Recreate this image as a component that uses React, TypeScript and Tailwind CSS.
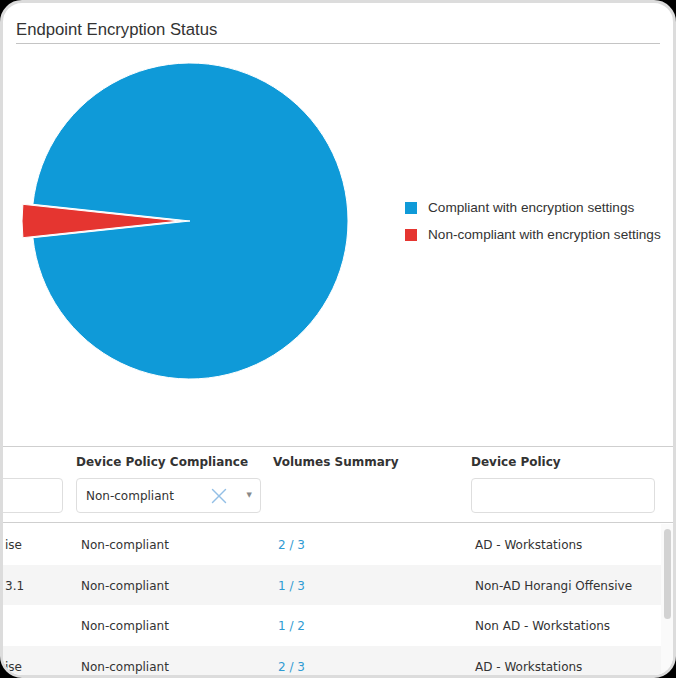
import { X } from 'lucide-react'

const rows = [
  { os: 'ise', compliance: 'Non-compliant', volumes: '2 / 3', policy: 'AD - Workstations' },
  { os: '3.1', compliance: 'Non-compliant', volumes: '1 / 3', policy: 'Non-AD Horangi Offensive' },
  { os: '', compliance: 'Non-compliant', volumes: '1 / 2', policy: 'Non AD - Workstations' },
  { os: 'ise', compliance: 'Non-compliant', volumes: '2 / 3', policy: 'AD - Workstations' },
]

const legend = [
  { label: 'Compliant with encryption settings', color: 'bg-[#0f9ad8]' },
  { label: 'Non-compliant with encryption settings', color: 'bg-[#e53530]' },
]

function Pie() {
  return (
    <svg width="402" height="402" viewBox="0 0 402 402" className="shrink-0">
      <path d="M187,177 L29.9,160.3 A158,158 0 1 1 29.9,193.7 Z" fill="#0f9ad8" stroke="#fff" strokeWidth="1" />
      <path d="M177,177 L19.9,193.7 A158,158 0 0 1 19.9,160.3 Z" fill="#e53530" stroke="#fff" strokeWidth="1" />
    </svg>
  )
}

export default function App() {
  return (
    <div className="h-[678px] w-[676px] bg-black">
      <div className="flex h-full flex-col overflow-hidden rounded-[22px] border-[3px] border-[#dcdcdc] bg-white" style={{ fontFamily: '"Liberation Sans", Arial, sans-serif' }}>
        {/* titolo */}
        <div className="px-[13px] pt-[17px]">
          <h2 className="border-b border-[#c4c4c4] pb-[4px] text-[16.7px] leading-[19px] text-[#333]">Endpoint Encryption Status</h2>
        </div>

        {/* grafico + legenda */}
        <div className="flex h-[402px] items-start">
          <Pie />
          <div className="flex flex-col gap-[12px] pt-[156px]">
            {legend.map((l) => (
              <div key={l.label} className="flex items-center gap-[11px] text-[13.6px] leading-[15px] text-[#333]">
                <span className="h-[12px] w-[12px] shrink-0">
                  <span className={`block h-full w-full ${l.color}`} />
                </span>
                <span>{l.label}</span>
              </div>
            ))}
          </div>
        </div>

        {/* tabella */}
        <div className="flex-1 border-t border-[#cfcfcf] text-[12px] text-[#333]" style={{ fontFamily: '"DejaVu Sans", Verdana, sans-serif' }}>
          <div className="grid h-[76px] grid-cols-[67px_197px_198px_196px_12px] border-b border-[#cfcfcf]">
            <div className="pr-[7px] pt-[31px]">
              <div className="-ml-[20px] h-[35px] rounded-[4px] border border-[#dedede] bg-white" />
            </div>
            <div className="px-[6px] pt-[7px]">
              <div className="font-bold leading-[16px]">Device Policy Compliance</div>
              <div className="mt-[8px] flex h-[35px] items-center rounded-[4px] border border-[#dedede] pl-[9px] pr-[8px]">
                <span className="flex-1">Non-compliant</span>
                <X className="h-[26px] w-[26px] text-[#93bfe6]" strokeWidth={1.3} />
                <span className="ml-[15px] text-[7px] text-[#888]">▼</span>
              </div>
            </div>
            <div className="px-[6px] pt-[7px] font-bold leading-[16px]">Volumes Summary</div>
            <div className="px-[6px] pt-[7px]">
              <div className="font-bold leading-[16px]">Device Policy</div>
              <div className="mt-[8px] h-[35px] rounded-[4px] border border-[#dedede] bg-white" />
            </div>
            <div />
          </div>

          <div className="flex pt-[1px]">
            <div className="flex-1">
              {rows.map((r, i) => (
                <div key={i} className={`grid h-[40.5px] grid-cols-[67px_197px_198px_1fr] items-center pt-[2px] ${i % 2 === 1 ? 'bg-[#f5f5f5]' : ''}`}>
                  <div className="whitespace-nowrap pl-[2px]">{r.os}</div>
                  <div className="pl-[11px]">{r.compliance}</div>
                  <div className="pl-[11px] text-[#2f9bd3]">{r.volumes}</div>
                  <div className="pl-[10px]">{r.policy}</div>
                </div>
              ))}
            </div>
            <div className="w-[12px] bg-[#fafafa] pl-[3px] pr-[2px] pt-[5px]">
              <div className="h-[90px] rounded-full bg-[#d2d2d2]" />
            </div>
          </div>
        </div>
      </div>
    </div>
  )
}
